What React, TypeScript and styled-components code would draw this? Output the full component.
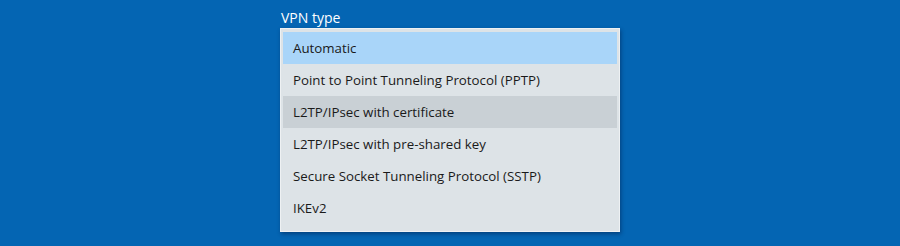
import React from "react";
import styled, { createGlobalStyle } from "styled-components";

const GlobalStyle = createGlobalStyle`
  html, body {
    margin: 0;
    padding: 0;
    background: #0465b3;
  }
  body {
    font-family: "Open Sans", "Noto Sans", sans-serif;
  }
`;

const Page = styled.div`
  width: 900px;
  height: 246px;
  background: #0465b3;
  display: flex;
  justify-content: center;
  padding-top: 9px;
  box-sizing: border-box;
`;

const Field = styled.div`
  width: 340px;
  display: flex;
  flex-direction: column;
`;

const Label = styled.div`
  color: #ffffff;
  font-size: 14px;
  line-height: 18px;
  padding-left: 1px;
  margin-bottom: 1px;
`;

const Menu = styled.ul`
  list-style: none;
  margin: 0;
  padding: 3px 2px 7px;
  background: #dde3e7;
  border: 1px solid #eef1f3;
  box-shadow: 1px 2px 4px rgba(0, 20, 60, 0.45);
`;

const Option = styled.li<{ $state?: "selected" | "hover" }>`
  height: 32px;
  display: flex;
  align-items: center;
  padding-left: 10px;
  font-size: 13.3px;
  color: #1a1a1a;
  background: ${(p) =>
    p.$state === "selected"
      ? "#a9d5f9"
      : p.$state === "hover"
      ? "#c9d0d5"
      : "transparent"};
`;

const options: { label: string; state?: "selected" | "hover" }[] = [
  { label: "Automatic", state: "selected" },
  { label: "Point to Point Tunneling Protocol (PPTP)" },
  { label: "L2TP/IPsec with certificate", state: "hover" },
  { label: "L2TP/IPsec with pre-shared key" },
  { label: "Secure Socket Tunneling Protocol (SSTP)" },
  { label: "IKEv2" },
];

const App: React.FC = () => {
  return (
    <>
      <GlobalStyle />
      <Page>
        <Field>
          <Label>VPN type</Label>
          <Menu>
            {options.map((o) => (
              <Option key={o.label} $state={o.state}>
                {o.label}
              </Option>
            ))}
          </Menu>
        </Field>
      </Page>
    </>
  );
};

export default App;
